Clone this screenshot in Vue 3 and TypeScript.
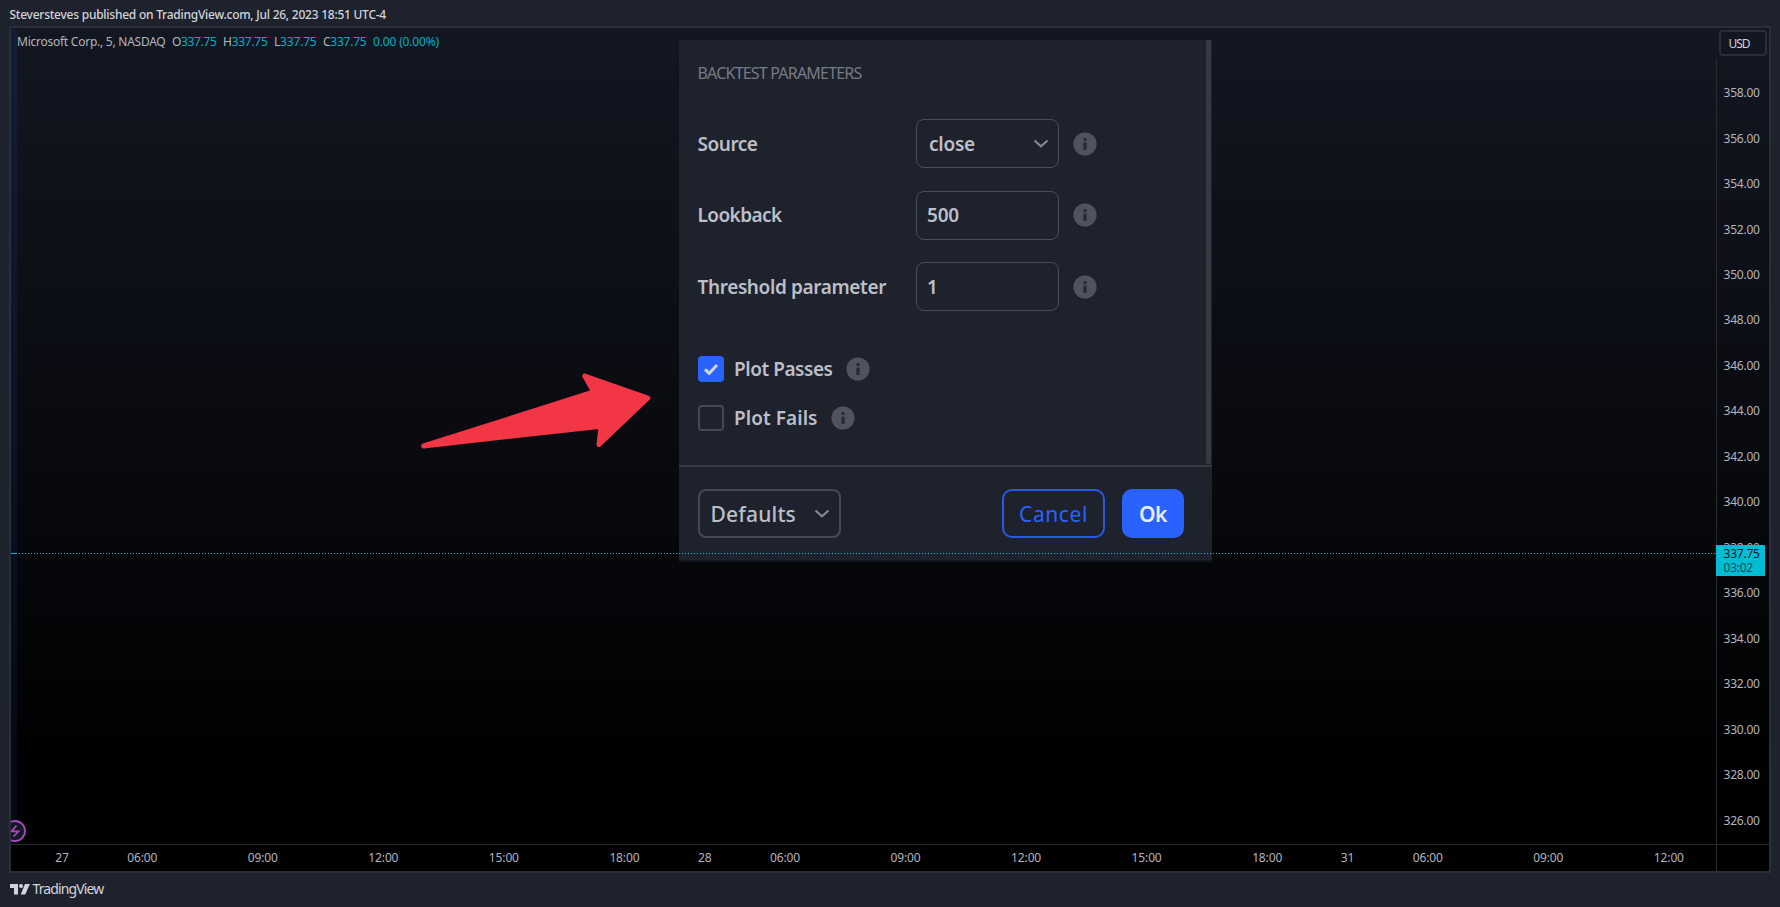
<script setup lang="ts">
interface Tick { label: string; slot: number }

const prices: string[] = Array.from({ length: 17 }, (_, i) => (358 - i * 2).toFixed(2))

const times: Tick[] = [
  { label: '27', slot: 0 }, { label: '06:00', slot: 2 }, { label: '09:00', slot: 5 },
  { label: '12:00', slot: 8 }, { label: '15:00', slot: 11 }, { label: '18:00', slot: 14 },
  { label: '28', slot: 16 }, { label: '06:00', slot: 18 }, { label: '09:00', slot: 21 },
  { label: '12:00', slot: 24 }, { label: '15:00', slot: 27 }, { label: '18:00', slot: 30 },
  { label: '31', slot: 32 }, { label: '06:00', slot: 34 }, { label: '09:00', slot: 37 },
  { label: '12:00', slot: 40 },
]

const quotes = [
  { key: 'O', w: 44.5 }, { key: 'H', w: 44.5 }, { key: 'L', w: 42.5 }, { key: 'C', w: 43.5 },
]

const fields = [
  { label: 'Source', w: 60, value: 'close', vw: 46, select: true },
  { label: 'Lookback', w: 84, value: '500', vw: 32, select: false },
  { label: 'Threshold parameter', w: 188.5, value: '1', vw: 9, select: false },
]

const checks = [
  { label: 'Plot Passes', w: 98.5, on: true },
  { label: 'Plot Fails', w: 83.5, on: false },
]

// Tracks a label's letters so that it fills the given width.
const vFit = {
  mounted(el: HTMLElement, binding: { value: number }) {
    const count = (el.textContent ?? '').length
    const natural = el.getBoundingClientRect().width
    el.style.letterSpacing = `${(binding.value - natural) / count}px`
  },
}
</script>

<template>
  <div class="page">
    <header class="byline"><span v-fit="376.5">Steversteves published on TradingView.com, Jul 26, 2023 18:51 UTC-4</span></header>

    <main class="chart">
      <div class="upper">
        <section class="pane">
          <div class="session"></div>
          <div class="legend">
            <span v-fit="148.5" class="symbol">Microsoft Corp., 5, NASDAQ</span>
            <span v-for="q in quotes" :key="q.key" v-fit="q.w" class="quote">{{ q.key }}<b>337.75</b></span>
            <span v-fit="66" class="quote"><b>0.00 (0.00%)</b></span>
          </div>

          <svg class="arrow" width="240" height="90" viewBox="415 367 240 90">
            <path d="M423.6 446 593.8 391.9 584.8 376 647.8 398 599 444.5 601 426.2Z" />
          </svg>

          <div class="dialog">
            <div class="params">
              <h2><span v-fit="164">BACKTEST PARAMETERS</span></h2>
              <div v-for="f in fields" :key="f.label" class="field">
                <div class="name"><span v-fit="f.w">{{ f.label }}</span></div>
                <div class="box" :class="{ select: f.select }">
                  <span v-fit="f.vw">{{ f.value }}</span>
                  <svg v-if="f.select" class="chev" width="16" height="9" viewBox="0 0 16 9"><path d="M1.5 1.5 8 7.3 14.5 1.5" /></svg>
                </div>
                <svg class="info" width="24" height="24" viewBox="0 0 24 24"><circle cx="12" cy="12" r="11.6" /><rect x="10.3" y="6" width="3.4" height="3" rx="1" /><rect x="10.3" y="10.5" width="3.4" height="7.5" rx=".5" /></svg>
              </div>
              <div class="checks">
                <div v-for="c in checks" :key="c.label" class="check">
                  <div class="tick" :class="{ on: c.on }">
                    <svg v-if="c.on" width="16" height="13" viewBox="0 0 16 13"><path d="M2 6.3 6.2 10.3 14 2" /></svg>
                  </div>
                  <span v-fit="c.w">{{ c.label }}</span>
                  <svg class="info" width="24" height="24" viewBox="0 0 24 24"><circle cx="12" cy="12" r="11.6" /><rect x="10.3" y="6" width="3.4" height="3" rx="1" /><rect x="10.3" y="10.5" width="3.4" height="7.5" rx=".5" /></svg>
                </div>
              </div>
              <div class="scroll"></div>
            </div>
            <footer class="actions">
              <div class="btn defaults">
                <span v-fit="85.5">Defaults</span>
                <svg class="chev" width="16" height="9" viewBox="0 0 16 9"><path d="M1.5 1.5 8 7.3 14.5 1.5" /></svg>
              </div>
              <div class="btn cancel"><span v-fit="69">Cancel</span></div>
              <div class="btn ok"><span v-fit="28">Ok</span></div>
            </footer>
          </div>

          <div class="last-line"></div>
          <svg class="bolt" width="24" height="24" viewBox="0 0 24 24">
            <circle cx="12" cy="12" r="10" />
            <path d="M13.5 6.5 8.5 12.3H15.5L10.5 17.5" />
          </svg>
        </section>

        <aside class="scale">
          <div class="currency"><span v-fit="21">USD</span></div>
          <div class="prices">
            <div v-for="p in prices" :key="p" class="price"><span v-fit="36.2">{{ p }}</span></div>
          </div>
          <div class="last"><span v-fit="36.2">337.75</span><span v-fit="29.5" class="count">03:02</span></div>
        </aside>
      </div>

      <div class="timeline">
        <div class="times">
          <span v-for="t in times" :key="t.slot" :style="{ gridColumn: `${t.slot + 1} / span 2` }"><i v-fit="t.label.length > 2 ? 30 : 13.5">{{ t.label }}</i></span>
        </div>
        <div class="corner"></div>
      </div>
    </main>

    <footer class="brand">
      <svg width="20" height="11" viewBox="0 0 20 11"><path d="M0 0H8V10.5H4V4H0Z" /><circle cx="11" cy="2" r="2" /><path d="M15 0H19.8L15.3 10.5H10.7Z" /></svg>
      <span v-fit="71">TradingView</span>
    </footer>
  </div>
</template>

<style>
body { background: #1e222d; overflow: hidden; }
</style>

<style scoped>
* { box-sizing: border-box; }
.page {
  width: 1780px; height: 907px; display: flex; flex-direction: column;
  background: #1e222d; color: #b2b5be; overflow: hidden;
  font: 12px/16px "Trebuchet MS", "Noto Sans", "Open Sans", sans-serif;
}
.page span, .page i { white-space: nowrap; font-style: normal; display: inline-block; }
.byline { height: 26px; padding: 7px 0 0 9.5px; color: #d1d4dc; font-weight: 500; }
.chart {
  width: 1762px; height: 847px; margin-left: 9px; flex: none; display: flex; flex-direction: column;
  border: 2px solid #2a2e39; background: linear-gradient(#131722, #000 90%);
}
.upper { display: flex; height: 816px; }
.pane { position: relative; width: 1705px; height: 816px; overflow: hidden; }
.session { position: absolute; left: 0; top: 0; width: 6px; height: 100%; background: rgba(33, 98, 243, .09); }
.legend { display: flex; height: 16px; margin: 6px 0 0 6px; position: relative; }
.quote { margin-left: 6.5px; }
.quote b { color: #00bcd4; opacity: .92; font-weight: 400; }
.arrow { position: absolute; left: 404px; top: 339px; fill: #f23645; stroke: #f23645; stroke-width: 5; stroke-linejoin: round; }

.dialog {
  position: absolute; left: 668px; top: 12px; width: 533px; height: 522px;
  background: #1e222d; border-bottom: 2px solid #131722; color: #bcbfc8;
  font-size: 19px; line-height: 24px; font-weight: 600;
}
.params { position: relative; height: 425px; padding: 20px 0 0 18.5px; }
h2 { margin: 0; height: 59px; font-size: 16px; line-height: 26px; font-weight: 400; color: #787b86; }
.field { display: flex; align-items: center; height: 49px; margin-bottom: 22.5px; }
.name { width: 218.5px; }
.box {
  width: 143px; height: 49px; display: flex; align-items: center; justify-content: space-between;
  padding: 0 9px 0 10px; margin-right: 14px; border: 1.6px solid #4a4d58; border-radius: 8px;
}
.box.select { padding-left: 12px; }
.chev { fill: none; stroke: #868993; stroke-width: 2; }
.info { display: block; flex: none; }
.info circle { fill: #50535e; }
.info rect { fill: #292c37; }
.checks { display: flex; flex-direction: column; gap: 21.5px; padding-top: 22px; }
.check { display: flex; align-items: center; height: 27px; }
.check span { margin: 0 13px 0 10.5px; }
.tick { width: 26px; height: 26px; border: 2px solid #464954; border-radius: 4px; display: flex; align-items: center; justify-content: center; }
.tick.on { background: #2962ff; border-color: #2962ff; }
.tick path { fill: none; stroke: #d1d4dc; stroke-width: 3; }
.scroll { position: absolute; right: 1px; top: 0; width: 5px; height: 424px; background: #363a45; border-radius: 0 0 2px 2px; }
.actions { display: flex; align-items: center; height: 95px; border-top: 2px solid #363a45; padding: 0 28px 0 19px; }
.btn { height: 49px; display: flex; align-items: center; justify-content: center; border: 2px solid #2759e2; border-radius: 10px; font-size: 21px; }
.defaults { width: 143px; margin-right: auto; justify-content: space-between; padding: 0 9px 0 10.5px; border-color: #464954; border-radius: 8px; font-weight: 500; }
.cancel { width: 103px; color: #2962ff; font-weight: 400; margin-right: 17px; }
.ok { width: 62px; background: #2962ff; border-color: #2962ff; color: #e9edfb; }

.last-line { position: absolute; left: 0; top: 525px; width: 100%; height: 1px; background: linear-gradient(#00bcd4, #00bcd4) 0 0 / 6px 1px no-repeat, repeating-linear-gradient(90deg, transparent 0 2px, #00bcd4 2px 3px); }
.bolt { position: absolute; left: -8px; top: 791px; fill: none; stroke: #ab47bc; stroke-width: 1.8; }
.bolt circle { fill: #131722; }

.scale { position: relative; width: 53px; height: 816px; background: linear-gradient(#2a2a2e, #2a2a2e) 0 31px / 1px 100% no-repeat; }
.currency { width: 48px; height: 26px; margin: 2px 0 0 3px; display: flex; align-items: center; padding: 1px 0 0 7.5px; border: 2px solid #2a2e39; border-radius: 4px; color: #d1d4dc; }
.prices { margin-top: 14.4px; padding-left: 7.5px; }
.price { height: 45.47px; display: flex; align-items: center; }
.last { position: absolute; left: 0; top: 517px; width: 49px; height: 31px; padding: 2px 0 0 7.5px; background: #00bcd4; color: #101820; line-height: 14px; border-radius: 0 1px 1px 0; display: flex; flex-direction: column; align-items: flex-start; }
.count { opacity: .7; }
.timeline { display: flex; height: 27px; border-top: 1px solid #2a2a2e; background: #000; }
.times { width: 1705px; flex: none; display: grid; grid-template-columns: repeat(42, 40.18px); padding: 5px 0 0 10.8px; }
.times span { grid-row: 1; text-align: center; }
.corner { width: 53px; border-left: 1px solid #2a2a2e; }
.brand { display: flex; padding: 8px 0 0 10px; color: #d1d4dc; font-size: 14px; }
.brand svg { fill: #d1d4dc; margin: 3px 2.5px 0 0; }
</style>
